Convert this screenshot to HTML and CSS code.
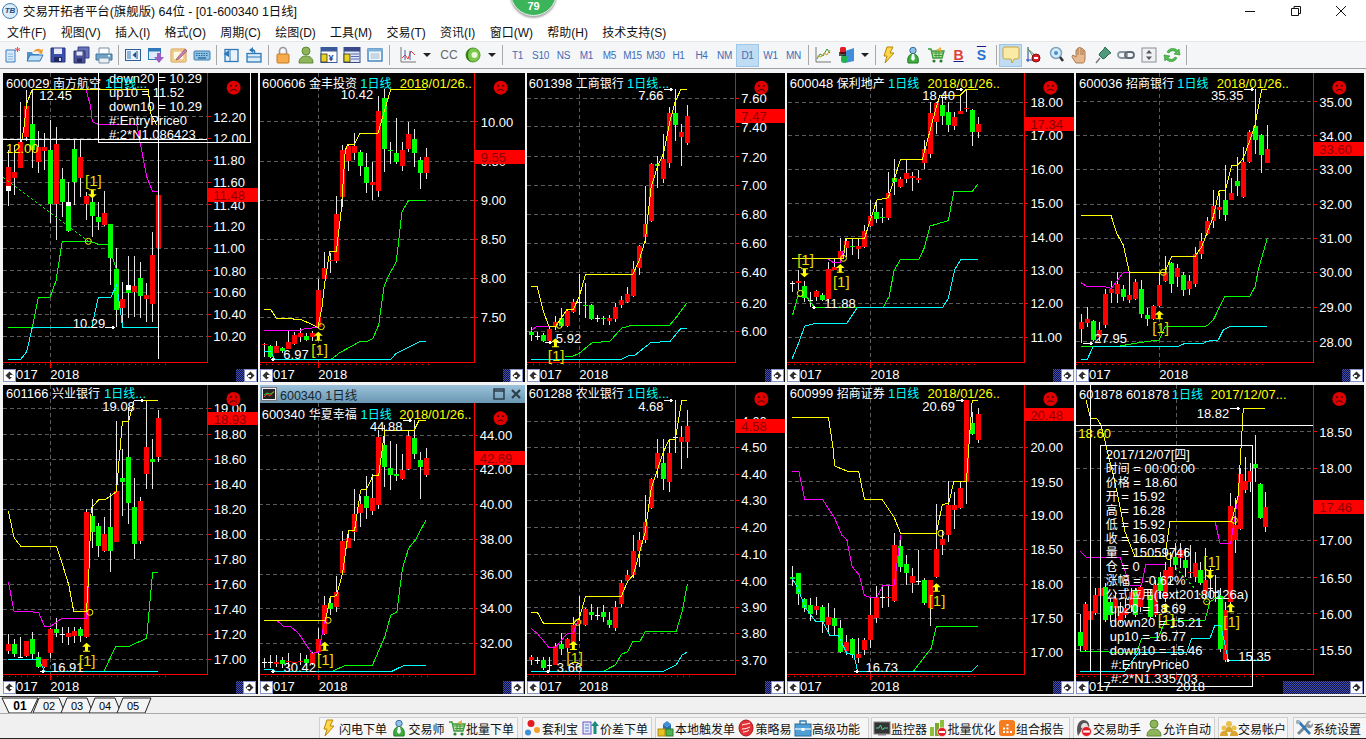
FILE: index.html
```html
<!DOCTYPE html>
<html lang="zh">
<head>
<meta charset="utf-8">
<title>交易开拓者平台(旗舰版) 64位</title>
<link rel="stylesheet" href="styles.css">
</head>
<body>
<svg class="defs" width="0" height="0" aria-hidden="true">
  <symbol id="i-bolt" viewBox="0 0 18 18"><path d="M10 1H6L3 10h3l-2 7 9-10H9l3-6z" fill="#ffd84a" stroke="#b8860b"/></symbol>
  <symbol id="i-trader" viewBox="0 0 18 18"><circle cx="9" cy="4.5" r="3.2" fill="#8fc1e8" stroke="#3a6d9c"/><path d="M4 17c-1-6 1-9 5-9s6 3 5 9z" fill="#3fae3f" stroke="#1f7a1f"/><path d="M8 8h2l1 5-2 2-2-2z" fill="#f3f8ff"/></symbol>
  <symbol id="i-cart" viewBox="0 0 18 18"><path d="M1 3h3l2 9h9l2-7H5" fill="#bfe3a8" stroke="#3f9a3f" stroke-width="1.4"/><path d="M6 7h10M7 9.500h8M9 5v7M12 5v7" stroke="#3f9a3f" fill="none"/><circle cx="7" cy="15" r="1.600" fill="#2e7d2e"/><circle cx="14" cy="15" r="1.600" fill="#2e7d2e"/><path d="M9 4l5-3v5z" fill="#e8a020" opacity=".8"/></symbol>
  <symbol id="i-person" viewBox="0 0 18 18"><circle cx="9" cy="5" r="4" fill="#8fb55a" stroke="#5f8a35"/><path d="M2 17c0-5 3-7 7-7s7 2 7 7z" fill="#8fb55a" stroke="#5f8a35"/></symbol>
  <symbol id="i-no" viewBox="0 0 10 10"><circle cx="5" cy="5" r="4.500" fill="#e31b23" stroke="#fff" stroke-width=".6"/><rect x="2" y="4" width="6" height="2" fill="#fff"/></symbol>
</svg>

<header class="titlebar">
  <span class="logo">TB</span>
  <span class="apptitle">交易开拓者平台(旗舰版) 64位 - [01-600340 1日线]</span>
  <div class="winctl">
    <svg width="14" height="14" viewBox="0 0 14 14"><path d="M1 7.500h10" stroke="#111" fill="none"/></svg>
    <svg width="14" height="14" viewBox="0 0 14 14"><path d="M2.500 4.500h7v7h-7zM5 4.500V2.500h6.500v7h-2" stroke="#111" fill="none"/></svg>
    <svg width="14" height="14" viewBox="0 0 14 14"><path d="M2 2l10 10M12 2L2 12" stroke="#111" fill="none"/></svg>
  </div>
  <div class="badge"><span>79</span></div>
</header>

<nav class="menubar">
  <span>文件(F)</span><span>视图(V)</span><span>插入(I)</span><span>格式(O)</span><span>周期(C)</span><span>绘图(D)</span><span>工具(M)</span><span>交易(T)</span><span>资讯(I)</span><span>窗口(W)</span><span>帮助(H)</span><span>技术支持(S)</span>
</nav>

<div class="toolbar">
  <span class="btn"><svg viewBox="0 0 18 18"><path d="M3 4h9v12H3z" fill="#d8e9f8" stroke="#3a7cc0"/><path d="M5 8h5M5 10.500h5M5 13h5" stroke="#8db8de"/><path d="M14.500 1v5M12 2.500l5 2M17 2.500l-5 2" stroke="#ef4a4a"/></svg></span>
  <span class="btn"><svg viewBox="0 0 18 18"><path d="M1 15V6h5l1 2h6v7z" fill="#4f93d0"/><path d="M1 15l3-6h13l-3 6z" fill="#bfe0f7" stroke="#2a72b5"/><path d="M7 6c3-4 6-4 8-2l2-1-1 5-4-1 2-1c-2-1-4-1-7 0z" fill="#f09a2c"/></svg></span>
  <span class="btn"><svg viewBox="0 0 18 18"><path d="M2 2h14v14H2z" fill="#3d4fae" stroke="#27337a"/><rect x="5" y="2.500" width="8" height="5.500" fill="#e8ecf8"/><rect x="5" y="11" width="8" height="5" fill="#20285f"/><rect x="10" y="12" width="2" height="3" fill="#c9d2ef"/></svg></span>
  <span class="btn"><svg viewBox="0 0 18 18"><path d="M6 1h11v11H6z" fill="#6870b8" stroke="#3b4288"/><path d="M2 5h11v12H2z" fill="#4b5298" stroke="#2e3470"/><rect x="4.500" y="5.500" width="6" height="4" fill="#e1e4f2"/><rect x="5" y="12.500" width="5" height="4" fill="#262b60"/></svg></span>
  <span class="btn"><svg viewBox="0 0 18 18"><path d="M4 7V2h10v5" fill="#fff" stroke="#7a8ea5"/><path d="M1 8h16v6H1z" fill="#6ea4c9" stroke="#3f7098"/><path d="M4 12h10v5H4z" fill="#eaf1f6" stroke="#7a8ea5"/><rect x="13" y="9" width="2" height="1.500" fill="#fff"/></svg></span>
  <i class="sep"></i>
  <span class="btn"><svg viewBox="0 0 18 18"><rect x="1.500" y="3.500" width="15" height="11" fill="#eaf3fb" stroke="#2f5f95"/><rect x="3" y="5" width="4" height="8" fill="#8fb5d8"/><path d="M12 6l-3.500 3 3.500 3z" fill="#26507f"/><path d="M13 5v8" stroke="#26507f"/></svg></span>
  <span class="btn"><svg viewBox="0 0 18 18"><rect x="1.500" y="2.500" width="12" height="11" fill="#dcecf9" stroke="#2f79b8"/><rect x="1.500" y="2.500" width="12" height="3" fill="#2f79b8"/><path d="M10 7h4v4h3l-5 6-5-6h3z" fill="#9a5fc6"/></svg></span>
  <span class="btn"><svg viewBox="0 0 18 18"><rect x="1" y="3" width="15" height="13" rx="1" fill="#fbe6b8" stroke="#d69a3a"/><rect x="3" y="5" width="11" height="9" fill="#fff8e2" stroke="#e0b060"/><path d="M7 12l8-9 2 2-8 8-3 1z" fill="#c879c2" stroke="#8c5a3a" stroke-width=".6"/></svg></span>
  <span class="btn"><svg viewBox="0 0 18 18"><rect x="1" y="5" width="16" height="9" rx="1" fill="#8cc1e4" stroke="#3a7cae"/><path d="M3 7.500h12M3 9.500h12" stroke="#2e6b9a" stroke-dasharray="1.500 1"/><path d="M5 12h8" stroke="#2e6b9a" stroke-width="1.400"/></svg></span>
  <i class="sep"></i>
  <span class="btn"><svg viewBox="0 0 18 18"><rect x="3" y="3.500" width="13" height="12" fill="#eaf3fb" stroke="#2f79b8" stroke-width="1.300"/><path d="M8 3.500v12" stroke="#2f79b8"/><path d="M7 4L1.500 8 7 11z" fill="#2f79b8"/></svg></span>
  <span class="btn"><svg viewBox="0 0 18 18"><rect x="2" y="7.500" width="14" height="8.500" fill="#dcecf9" stroke="#2f79b8" stroke-width="1.300"/><path d="M2 11h14" stroke="#2f79b8"/><path d="M9 8c2-1 2-4-1-5V1L4 4l4 3V5c1 .5 1 2 1 3z" fill="#2f79b8"/></svg></span>
  <i class="sep"></i>
  <span class="btn"><svg viewBox="0 0 18 18"><path d="M5.500 8V5a3.500 3.500 0 0 1 7 0v3" fill="none" stroke="#9a9a9a" stroke-width="1.600"/><rect x="3" y="8" width="12" height="9" rx="1" fill="#f6ab4c" stroke="#c77a20"/></svg></span>
  <span class="btn"><svg viewBox="0 0 18 18"><use href="#i-person"/></svg></span>
  <span class="btn"><svg viewBox="0 0 18 18"><rect x="1" y="1.500" width="16" height="15" fill="#fff" stroke="#3b5a9a"/><rect x="1" y="1.500" width="16" height="4" fill="#3b5a9a"/><text x="8.500" y="15" class="ytxt">¥</text><rect x="1" y="8" width="6" height="8" fill="#e6d21f" stroke="#333" stroke-width=".8"/></svg></span>
  <span class="btn"><svg viewBox="0 0 18 18"><rect x="1" y="1.500" width="16" height="15" fill="#dfe8f6" stroke="#3b4a8a"/><rect x="1" y="1.500" width="16" height="4" fill="#3b4a8a"/><path d="M8 8h8M8 10.500h8M8 13h8" stroke="#5a6bb0"/><rect x="1" y="8" width="6" height="8" fill="#e6d21f" stroke="#333" stroke-width=".8"/></svg></span>
  <span class="btn"><svg viewBox="0 0 18 18"><rect x="2" y="3" width="14" height="12" fill="#f2f7fc" stroke="#2f79b8" stroke-width="1.300"/><rect x="2" y="3" width="14" height="2.500" fill="#7fb2da"/><path d="M4.500 8h9M4.500 10h9M4.500 12h9" stroke="#9bb7cf"/></svg></span>
  <i class="sep"></i>
  <span class="btn first"><svg viewBox="0 0 18 18"><path d="M2 1v15h15" fill="none" stroke="#777"/><path d="M3 12l3-3 3 4 3-8 4 4" fill="none" stroke="#e33"/><path d="M6 4v10M11 5v9" stroke="#3b5fa8"/></svg></span>
  <span class="btn arrow"><i class="drop"></i></span>
  <span class="btn cc">CC</span>
  <span class="btn"><svg viewBox="0 0 18 18"><circle cx="9" cy="9" r="7" fill="#7cc84a" stroke="#4f9a2e"/><path d="M9 2a7 7 0 0 0 0 14 5 7 0 0 1 0-14z" fill="#2f7a1e"/><circle cx="10.500" cy="9" r="3" fill="#eaf7d8"/></svg></span>
  <span class="btn arrow"><i class="drop"></i></span>
  <i class="sep wide"></i>
  <span class="btn txt">T1</span><span class="btn txt">S10</span><span class="btn txt">NS</span><span class="btn txt">M1</span><span class="btn txt">M5</span><span class="btn txt">M15</span><span class="btn txt">M30</span><span class="btn txt">H1</span><span class="btn txt">H4</span><span class="btn txt">NM</span><span class="btn txt on">D1</span><span class="btn txt">W1</span><span class="btn txt">MN</span>
  <i class="sep"></i>
  <span class="btn"><svg viewBox="0 0 18 18"><path d="M2 1v15h15" fill="none" stroke="#777"/><path d="M3 13l3-5 3 2 4-7 3 4" fill="none" stroke="#2e9a2e"/><path d="M3 10l4 1 3-4 3 2 3-5" fill="none" stroke="#c8a020"/></svg></span>
  <span class="btn"><svg viewBox="0 0 18 18"><path d="M8 5l9-3v13l-9 2z" fill="#3f8fd8"/><rect x="3" y="1" width="6" height="7" rx="1.500" fill="#e31b23"/><rect x="4" y="9" width="6" height="8" rx="3" fill="#21b24b"/><rect x="2" y="6" width="7" height="4" fill="#111" opacity=".7"/></svg></span>
  <span class="btn arrow"><i class="drop"></i></span>
  <i class="sep"></i>
  <span class="btn"><svg viewBox="0 0 18 18"><use href="#i-bolt"/></svg></span>
  <span class="btn"><svg viewBox="0 0 18 18"><use href="#i-trader"/></svg></span>
  <span class="btn"><svg viewBox="0 0 18 18"><use href="#i-cart"/></svg></span>
  <span class="btn bs b">B</span>
  <span class="btn bs s">S</span>
  <i class="sep"></i>
  <span class="btn on"><svg viewBox="0 0 18 18"><path d="M3 1h12a2 2 0 0 1 2 2v8a2 2 0 0 1-2 2h-3l-2 4-1-4H3a2 2 0 0 1-2-2V3a2 2 0 0 1 2-2z" fill="#fbe9a6" stroke="#c9a640"/></svg></span>
  <span class="btn"><svg viewBox="0 0 18 18"><path d="M3 1v15M1 14h14" stroke="#1e3fa8" fill="none"/><path d="M3 3l8 7" stroke="#777" fill="none"/><path d="M3 3l6 9" stroke="#3aa83a" fill="none"/><circle cx="11" cy="12" r="4" fill="#e31b23" stroke="#7a1010"/><rect x="9" y="11" width="4" height="2" fill="#fff"/></svg></span>
  <span class="btn"><svg viewBox="0 0 18 18"><circle cx="8" cy="7" r="5.500" fill="#d6eaf8" stroke="#7fa3bd" stroke-width="1.500"/><circle cx="8" cy="7" r="2" fill="#3f8fd8"/><path d="M12 11l3 4" stroke="#333" stroke-width="2.500"/></svg></span>
  <span class="btn"><svg viewBox="0 0 18 18"><path d="M5 17c-2-3-4-5-4-7l1-1 3 2V4l1.500-.5L7 2l1.500-.5L10 2l1.500.5L12 3.500 13 4l1 1v7c0 3-1 5-2 5z" fill="#e8b98f" stroke="#a87850"/><path d="M7 2.500V9M10 2.500V9M12 4v5" stroke="#a87850" fill="none"/></svg></span>
  <span class="btn"><svg viewBox="0 0 18 18"><path d="M11 1l6 6-2 1-4 4-2 1-4-4 1-2 4-4z" fill="#4f9a7a" stroke="#2a6a50"/><path d="M6 12l-4 5" stroke="#777" stroke-width="1.400"/></svg></span>
  <span class="btn"><svg viewBox="0 0 18 18"><rect x="1" y="6" width="9" height="6" rx="3" fill="none" stroke="#8a949e" stroke-width="1.800"/><rect x="8" y="6" width="9" height="6" rx="3" fill="none" stroke="#5f6a75" stroke-width="1.800"/></svg></span>
  <span class="btn"><svg viewBox="0 0 18 18"><rect x="2" y="2" width="14" height="14" fill="#eef0f2" stroke="#8a8f95"/><path d="M9 4l3 3.500H6zM9 14l3-3.500H6z" fill="#555"/></svg></span>
  <span class="btn"><svg viewBox="0 0 18 18"><path d="M4 6a6.500 6.500 0 0 1 11-1l1-2 1 6-6-1 2-1.500A4 4 0 0 0 6 7z" fill="#4fbf4f" stroke="#2a8a2a" stroke-width=".6"/><path d="M14 12a6.500 6.500 0 0 1-11 1l-1 2-1-6 6 1-2 1.500A4 4 0 0 0 12 11z" fill="#4fbf4f" stroke="#2a8a2a" stroke-width=".6"/></svg></span>
  <i class="sep"></i>
</div>

<main class="desk">
  <section class="win"><div class="plot"></div></section>
  <section class="win"><div class="plot"></div></section>
  <section class="win"><div class="plot"></div></section>
  <section class="win"><div class="plot"></div></section>
  <section class="win"><div class="plot"></div></section>
  <section class="win"><div class="plot"></div></section>
  <section class="win active">
    <div class="caption">
      <svg class="capicon" viewBox="0 0 16 14"><rect x=".5" y=".5" width="15" height="13" fill="#eef" stroke="#777"/><rect x="2" y="2" width="12" height="10" fill="#222"/><path d="M3 10l3-3 3 2 4-5" stroke="#f33" fill="none"/><path d="M3 8l3-2 3 1 4-2" stroke="#3c3" fill="none"/></svg>
      <span class="captext">600340 1日线</span>
      <svg class="capbtn" viewBox="0 0 12 12"><path d="M1 1h10v10H1z M1 3h10" stroke="#2b3e4c" stroke-width="1.500" fill="none"/></svg>
      <svg class="capbtn" viewBox="0 0 12 12"><path d="M2 2l8 8M10 2l-8 8" stroke="#2b3e4c" stroke-width="2.200" fill="none"/></svg>
    </div>
    <div class="plot"></div>
  </section>
  <section class="win"><div class="plot"></div></section>
  <section class="win"><div class="plot"></div></section>
  <section class="win"><div class="plot"></div></section>
</main>

<div class="tabs">
  <svg width="165" height="17" viewBox="0 0 165 17">
    <path class="tab" d="M39 1 L33 16 H65 L59 1 Z"/>
    <path class="tab" d="M67 1 L61 16 H93 L87 1 Z"/>
    <path class="tab" d="M95 1 L89 16 H121 L115 1 Z"/>
    <path class="tab" d="M123 1 L117 16 H145 L151 1 Z"/>
    <path class="tab sel" d="M2 1 L9 16 H31 L38 1 Z"/>
    <text x="20" y="13" class="tabtxt bold">01</text>
    <text x="49" y="13" class="tabtxt">02</text>
    <text x="77" y="13" class="tabtxt">03</text>
    <text x="105" y="13" class="tabtxt">04</text>
    <text x="133" y="13" class="tabtxt">05</text>
  </svg>
</div>

<footer class="statusbar">
  <div class="grp g1">
    <span class="item"><svg viewBox="0 0 18 18"><use href="#i-bolt"/></svg>闪电下单</span>
    <span class="item"><svg viewBox="0 0 18 18"><use href="#i-trader"/></svg>交易师</span>
    <span class="item"><svg viewBox="0 0 18 18"><use href="#i-cart"/></svg>批量下单</span>
  </div>
  <div class="grp g2">
    <span class="item"><svg viewBox="0 0 18 18"><circle cx="7" cy="4.500" r="3.500" fill="#e31b23"/><circle cx="4" cy="13.500" r="3" fill="#3f8fd8"/><circle cx="13" cy="11" r="3" fill="#f2a12e"/></svg>套利宝</span>
    <span class="item"><svg viewBox="0 0 18 18"><rect x="1" y="3" width="8" height="12" fill="#e9e3f7" stroke="#6a58c0"/><path d="M3 6h4M3 9h4M3 12h4" stroke="#3f8fd8"/><path d="M13 2l4 5h-2.500v8h-3V7H9z" fill="#1a8a80"/></svg>价差下单</span>
  </div>
  <div class="grp g3">
    <span class="item"><svg viewBox="0 0 18 18"><path d="M6 5l4-3 4 3-4 3z" fill="#3f8fd8"/><path d="M6 5v5l4 2V8zM14 5v5l-4 2V8z" fill="#2a6fb5"/><rect x="1" y="10" width="7" height="7" fill="#e9c21f" stroke="#a88a10"/><rect x="9" y="10" width="7" height="7" fill="#4fb44f" stroke="#2a7a2a"/></svg>本地触发单</span>
    <span class="item"><svg viewBox="0 0 18 18"><ellipse cx="9" cy="9" rx="7" ry="8" fill="#e33236" stroke="#a91a1e"/><path d="M5 6c3-1 6-1 8-2M5 10c3 0 6-1 8-2M6 13c2 0 5-1 6-2" stroke="#fff" fill="none"/></svg>策略易</span>
    <span class="item"><svg viewBox="0 0 18 18"><path d="M6 5V2h6v3" fill="none" stroke="#3a7cae" stroke-width="1.400"/><rect x="1" y="5" width="16" height="12" fill="#4f9ed6" stroke="#2a6d9e"/><path d="M1 10h16" stroke="#cfe6f6" stroke-width="1.500"/><rect x="7.500" y="9" width="3" height="3" fill="#fff"/></svg>高级功能</span>
  </div>
  <div class="grp g4">
    <span class="item"><svg viewBox="0 0 18 18"><rect x="1" y="3" width="16" height="12" fill="#333" stroke="#888"/><path d="M3 9h3l1.500-3 2 5 1.500-2h4" fill="none" stroke="#4fd08f"/><rect x="5" y="15" width="8" height="1.500" fill="#888"/></svg>监控器</span>
    <span class="item"><svg viewBox="0 0 18 18"><rect x="1" y="8" width="4" height="9" fill="#8fbf3a"/><rect x="6" y="4" width="4" height="13" fill="#7aa82e"/><rect x="11" y="1" width="4" height="10" fill="#8fbf3a"/><use href="#i-no" x="8" y="8" width="10" height="10"/></svg>批量优化</span>
    <span class="item"><svg viewBox="0 0 18 18"><rect x="1" y="1" width="16" height="16" rx="3" fill="#f57d20"/><path d="M5 12h2v2H5zM8.500 12h2v2h-2zM12 12h2v2h-2zM5 8.500h2v2H5zM8.500 8.500h2v2h-2zM8.500 5h2v2h-2z" fill="#fff"/></svg>组合报告</span>
  </div>
  <div class="grp g5">
    <span class="item"><svg viewBox="0 0 18 18"><path d="M3 17C1 10 2 2 8 1c5 0 7 4 6 8H8z" fill="#555"/><path d="M6 9c0-3 1-5 4-5 2 0 3 2 3 4z" fill="#e3e3e3"/><use href="#i-no" x="6" y="7" width="11" height="11"/></svg>交易助手</span>
    <span class="item"><svg viewBox="0 0 18 18"><use href="#i-person"/></svg>允许自动</span>
  </div>
  <div class="grp g6">
    <span class="item"><svg viewBox="0 0 18 18"><circle cx="9" cy="5" r="3" fill="#e8c04a"/><path d="M5 13c0-4 2-5 4-5s4 1 4 5z" fill="#d8a52e"/><circle cx="4" cy="9" r="2.500" fill="#e8c04a"/><path d="M0 17c0-4 2-5 4-5s4 1 4 5z" fill="#d8a52e"/><circle cx="14" cy="9" r="2.500" fill="#e8c04a"/><path d="M10 17c0-4 2-5 4-5s4 1 4 5z" fill="#d8a52e"/></svg>交易帐户</span>
  </div>
  <div class="grp g7">
    <span class="item"><svg viewBox="0 0 18 18"><path d="M3 15l9-9" stroke="#7a8a95" stroke-width="3"/><path d="M11 7a4 4 0 0 1 5-5l-2.500 2.500 2 2L18 4a4 4 0 0 1-5 5z" fill="#8a98a3"/><path d="M4 3l11 12" stroke="#2f79b8" stroke-width="2.600"/><circle cx="3" cy="3" r="2.200" fill="#9fb1bd"/></svg>系统设置</span>
  </div>
</footer>
<script src="chart.js"></script>
</body>
</html>
```
FILE: styles.css
```css
* { box-sizing: border-box; }
html, body { margin: 0; height: 739px; overflow: hidden; background: #f0f0f0; }
body { width: 1366px; font: 12px "Liberation Sans", "Noto Sans CJK SC", sans-serif; color: #111; }
.defs { position: absolute; }

.titlebar { position: relative; height: 22px; background: #fff; display: flex; align-items: center; padding-left: 2px; }
.logo { width: 16px; height: 16px; border-radius: 50%; border: 1.500px solid #3f7fb5; background: #dcecf8; color: #1d4f86; font: italic bold 8px/13px "Liberation Sans", sans-serif; text-align: center; margin-right: 5px; }
.apptitle { font-size: 12.400px; }
.winctl { margin-left: auto; display: flex; gap: 31px; padding-right: 18px; }
.badge { position: absolute; left: 510px; top: -31px; width: 47px; height: 47px; border-radius: 50%; background: #3cb55a; box-shadow: 0 2px 2px #aaa; border: 1px solid #e8f3ea; display: flex; align-items: flex-end; justify-content: center; color: #fff; font-weight: bold; font-size: 11px; padding-bottom: 3px; }

.menubar { height: 20px; background: #fff; display: flex; gap: 14.300px; padding-left: 7px; align-items: center; font-size: 12px; border-bottom: 1px solid #e6e6e6; }

.toolbar { height: 26px; background: #f5f6f7; display: flex; align-items: center; }
.btn { width: 23px; height: 23px; display: flex; align-items: center; justify-content: center; flex: none; border: 1px solid transparent; }
.btn svg { width: 18px; height: 18px; display: block; }
.btn.first { margin-left: 4px; }
.btn.arrow { width: 15px; }
.btn.cc { color: #666; font-size: 12px; width: 24px; margin-left: 3px; }
.btn.txt { font-size: 10px; color: #3f6cb8; letter-spacing: -.3px; }
.btn.on { background: #c0dcf3; border-color: #9cc6ea; }
.btn.bs { font: bold 14px "Liberation Sans", sans-serif; }
.btn.b { color: #e0403a; text-decoration: underline; text-decoration-color: #1a1a8a; }
.btn.s { color: #1f6fd0; text-decoration: overline; text-decoration-color: #1a1a8a; }
.drop { width: 0; height: 0; border-style: solid; border-width: 4px 4px 0; border-color: #222 transparent transparent; }
.sep { width: 1px; height: 20px; background: #a8a8a8; margin: 0 2.500px; flex: none; }
.sep.wide { margin: 0 3px 0 3px; }
.ytxt { font: bold 9px "Liberation Sans", sans-serif; fill: #1a3a8a; }

.desk { height: 628px; background: #f4f4f4; border-top: 1px solid #a0a0a0; padding: 4px 0 0 3px; display: grid; grid-template-columns: 255px 265px 258px 287px 288px; grid-template-rows: 309px 309px; gap: 3px 2px; }
.win { background: #000; display: flex; flex-direction: column; overflow: hidden; }
.plot { flex: 1; min-height: 0; }
.plot svg { display: block; }
.caption { height: 18px; flex: none; display: flex; align-items: center; gap: 3px; padding: 0 3px 0 1px; background: linear-gradient(#9cc2da, #6a97b2); color: #16262f; font-size: 12.500px; }
.capicon { width: 16px; height: 14px; }
.captext { flex: 1; }
.capbtn { width: 12px; height: 12px; margin-left: 2px; }

.t { font: 13px "Liberation Sans", "Noto Sans CJK SC", sans-serif; fill: #fff; }
.t tspan.c { font-size: 12px; }
.t.mk { font-size: 15px; }

.tabs { height: 18px; border-top: 1px solid #333; background: #f0f0f0; border-bottom: 1px solid #a9a9a9; overflow: hidden; }
.tabs svg { display: block; }
.tab { fill: #f4f4f4; stroke: #222; }
.tab.sel { fill: #fff; }
.tabtxt { font: 11px "Liberation Sans", sans-serif; text-anchor: middle; }
.tabtxt.bold { font-weight: bold; font-size: 12px; }

.statusbar { height: 25px; background: #f0f0f0; display: flex; gap: 3px; padding: 3px 0 0 319px; border-bottom: 1px solid #222; }
.grp { display: flex; justify-content: space-between; padding: 0 3px 0 1px; background: #f6f6f6; border: 1px solid #d0d0d0; border-width: 1px 1px 0 1px; align-items: center; flex: none; }
.g1 { width: 199px; margin-right: 1px; }
.g2 { width: 130px; }
.g3 { width: 214px; padding-right: 8px; margin-right: -1px; }
.g4 { width: 199px; padding-right: 5px; }
.g5 { width: 142px; }
.g6 { width: 70px; margin-right: 2px; }
.g7 { width: 73px; border-right: 0; }
.item { display: flex; align-items: center; font-size: 12px; white-space: nowrap; color: #111; }
.item svg { width: 18px; height: 18px; flex: none; }
```
FILE: chart.js
```js
var W='#ffffff',Y1='#ffff00',R='#ff0000',G='#00ff00',C='#00ffff',M='#ff00ff',MK='#e8dc00';
var panels=[
{z:3,ox:0,oy:70,vb:[3,73,255,309],l:10,rx:622,by:877,vx:151,lx:640,ti:[['600029 南方航空',18,W],['1日线...',315,C]],ty:38,face:[701,53],dz:[708,730],bt:732,
 ax:[['12.20',140],['12.00',205],['11.80',271],['11.60',337],['11.40',404],['11.20',469],['11.00',535],['10.80',602],['10.60',667],['10.40',733],['10.20',799]],tag:['11.48',354,396],
 cs:'25,292,347,240,407,r 25,347,362,347,362,W 43,306,323,225,375,r 61,215,294,97,290,r 79,108,200,60,213,r 97,162,240,60,295,g 115,232,275,183,308,r 133,232,243,188,300,r 151,240,402,150,460,g 169,222,402,172,510,r 187,327,395,295,440,g 205,408,483,335,487,g 205,395,408,395,408,W 223,237,335,210,405,g 241,262,323,208,380,r 259,378,402,365,450,r 277,396,437,385,500,g 295,441,456,397,480,g 313,429,465,363,468,r 331,462,563,462,645,g 349,597,719,535,770,g 367,688,713,635,770,r 385,660,668,558,745,g 385,646,660,646,660,W 403,648,665,558,740,r 421,624,678,575,745,g 439,676,686,640,755,r 457,555,701,485,755,r 475,376,533,376,533,r',
 g:['25,772 97,772 115,682 150,682 168,632 187,514 270,514 295,523 325,523 340,570 350,600'],c:['25,868 62,868 80,845 97,772 275,772 295,682 332,682 350,645 368,772 475,772'],m:['258,58 272,110 277,155 295,163 410,163 420,215 440,320 458,365 475,365'],y:['65,215 72,170 80,100 97,58 445,58 452,130 470,165'],dash:['10,323 265,514'],
 tx:[['12.45',118,75],['10.29',218,758],['12.00',18,233,Y1],['[1]',255,333,MK],['down20 = 10.29',327,25],['up10 = 11.52',327,67],['down10 = 10.29',327,109],['#:EntryPrice0',327,151],['#:2*N1.086423',327,193]],
 box:[296,0,752,216],cross:[208,475],dn:[[277,358,385]],up:[],ci:[[265,514]],arr:[[315,345,771]]},
{z:3,ox:258,oy:70,vb:[260,73,265,309],l:8,rx:650,by:877,vx:181,lx:668,ti:[['600606 金丰投资',12,W],['1日线',307,C],['2018/01/26..',425,Y1]],ty:38,face:[728,53],dz:[736,756],bt:758,
 ax:[['10.00',155],['9.50',274],['9.00',391],['8.50',508],['8.00',625],['7.50',742]],tag:['9.55',240,282],
 cs:'20,822,825,818,860,r 38,828,862,825,865,g 56,828,849,813,850,r 74,834,842,830,850,g 92,816,837,782,838,r 110,796,822,785,825,r 128,790,801,775,815,r 146,798,809,790,812,g 164,790,801,782,812,r 182,660,770,628,775,r 200,594,627,545,628,r 218,570,574,548,610,r 236,432,573,378,578,r 254,240,381,225,410,r 272,228,273,222,302,r 290,228,248,190,270,r 308,246,288,240,318,g 326,291,339,250,368,g 344,336,345,276,390,r 362,124,362,78,380,r 380,84,237,58,305,g 398,241,243,215,282,g 416,249,276,145,282,g 434,240,288,215,303,r 452,192,237,156,246,r 470,208,249,178,290,g 488,270,309,262,356,g 506,261,309,234,326,r',
 g:['220,868 245,848 305,815 330,813 345,805 362,765 378,650 390,620 415,575 432,425 452,391 503,391'],c:['18,844 38,844 50,868 398,868 415,850 488,814 503,814'],m:['18,781 128,781 145,775 180,773'],y:['18,718 38,718 55,745 128,748 180,772 192,710 200,640 215,545 235,545 250,420 262,240 270,222 290,222 305,190 360,190 380,120 398,58 503,58'],
 tx:[['10.42',248,73],['6.97',76,853],['[1]',160,840,MK]],up:[[181,785,812]],ci:[[190,770]],arr:[[40,52,868]]},
{z:2.851,ox:526,oy:70,vb:[527,73,258,309],l:5,rx:597,by:877,vx:152,lx:614,ti:[['601398 工商银行',8,W],['1日线...',288,C]],ty:38,face:[671,53],dz:[680,698],bt:700,
 ax:[['7.60',85],['7.40',170],['7.20',260],['7.00',346],['6.80',433],['6.60',520],['6.40',607],['6.20',698],['6.00',784]],tag:['7.47',118,158],
 cs:'16,786,794,770,812,g 33,797,797,787,810,w 50,795,813,790,815,g 67,778,813,770,815,r 84,755,772,738,780,r 101,743,768,715,770,g 118,722,767,720,772,r 135,696,725,686,728,r 152,697,697,612,735,w 169,705,706,640,745,g 186,705,746,703,750,g 203,744,744,735,755,w 220,744,746,738,765,g 237,744,752,735,765,r 254,712,748,700,755,r 272,690,705,678,715,r 289,672,696,652,698,r 306,597,678,572,680,r 323,527,593,525,615,r 340,462,500,348,520,r 357,282,453,280,455,r 374,282,287,258,354,g 392,267,327,192,338,r 409,129,278,112,295,r 426,129,165,58,212,g 443,186,201,162,288,r 460,138,219,105,225,r',
 g:['110,860 135,858 152,850 190,817 238,815 272,775 305,765 410,765 430,740 458,700'],c:['14,868 272,868 290,858 310,856 357,817 410,815 442,775 458,775'],m:['14,782 32,768 84,768'],y:['14,650 32,650 50,725 65,768 84,770 100,745 118,717 135,717 152,680 170,612 305,612 323,570 340,510 357,350 375,290 392,250 409,160 425,95 442,58 460,58'],
 tx:[['7.66',320,75],['5.92',85,803],['[1]',62,858,MK]],up:[[84,805,832]],ci:[[95,766]],arr:[[393,420,58],[55,75,817]]},
{z:2.851,ox:526,oy:70,vb:[787,73,287,309],l:748,rx:1421,by:877,vx:982,lx:1438,ti:[['600048 保利地产',752,W],['1日线',1032,C],['2018/01/26..',1145,Y1]],ty:38,face:[1495,53],dz:[1503,1524],bt:1526,
 ax:[['18.00',97],['17.00',196],['16.00',298],['15.00',400],['14.00',500],['13.00',601],['12.00',700],['11.00',802]],tag:['17.34',142,182],
 cs:'760,640,640,632,665,w 777,634,640,600,660,r 794,648,683,632,695,g 811,690,690,665,710,w 828,663,682,660,692,r 845,675,689,668,692,g 862,597,688,575,700,r 879,592,599,568,600,r 896,544,565,505,570,r 914,514,533,508,560,r 931,527,529,505,555,g 948,528,537,505,568,r 965,484,531,465,535,r 982,438,468,390,470,r 999,425,447,390,460,g 1016,441,445,415,460,g 1033,369,444,305,450,r 1051,323,336,268,375,g 1068,327,352,320,355,r 1085,309,327,270,340,r 1102,318,323,305,362,r 1119,324,329,300,340,r 1136,238,278,210,298,r 1153,130,251,95,263,r 1170,100,155,96,192,r 1187,105,138,85,165,g 1204,126,165,95,185,g 1221,142,167,125,180,r 1239,123,131,75,128,r 1256,115,118,60,125,r 1273,120,185,118,228,g 1290,162,185,142,204,r',
 g:['760,735 775,680 800,680 822,712 1018,712 1035,680 1050,600 1068,568 1120,568 1135,535 1152,468 1204,452 1220,364 1273,364 1288,342'],c:['758,868 775,825 795,768 825,760 915,760 945,712 1188,712 1204,685 1222,600 1240,568 1288,568'],m:['862,568 875,577 896,577 905,540'],y:['758,565 905,565 912,505 965,505 1000,390 1033,383 1068,268 1130,268 1170,110 1180,76 1238,76 1255,58 1288,58'],
 tx:[['18.40',1130,75],['11.88',850,698],['[1]',773,570,MK],['[1]',875,635,MK]],dn:[[794,595,622]],up:[[896,582,608]],ci:[[782,670],[905,565]],arr:[[1225,1245,58],[815,828,712]]},
{z:3,ox:1075,oy:70,vb:[1076,73,288,309],l:5,rx:716,by:877,vx:253,lx:733,ti:[['600036 招商银行',12,W],['1日线',307,C],['2018/01/26..',425,Y1]],ty:38,face:[793,53],dz:[802,822],bt:825,
 ax:[['35.00',95],['34.00',197],['33.00',298],['32.00',403],['31.00',505],['30.00',607],['29.00',712],['28.00',815]],tag:['33.60',216,258],
 cs:'19,756,776,732,818,r 37,747,759,711,770,r 55,753,809,750,812,g 73,781,802,755,812,r 91,672,765,658,775,r 109,656,669,632,700,r 127,642,672,606,700,r 145,657,681,645,692,g 163,675,690,606,698,r 181,636,687,627,690,r 199,657,732,630,745,g 217,735,747,715,767,g 235,708,747,705,750,r 253,645,708,605,712,r 271,610,633,558,635,r 289,580,642,575,668,g 307,594,621,582,650,r 325,615,660,605,678,g 343,633,657,615,674,r 361,552,641,530,650,r 379,513,552,490,567,r 397,453,492,440,495,r 415,408,453,360,475,r 433,411,420,370,447,r 451,390,435,285,453,g 469,369,390,325,390,r 487,333,348,262,378,g 505,276,382,232,385,r 523,186,276,180,278,r 541,168,210,58,252,g 559,195,255,192,309,g 577,237,279,165,280,r',
 g:['18,829 130,829 180,820 235,812 253,810 270,770 395,768 415,750 450,678 525,678 540,650 550,600 577,505'],c:['18,868 37,868 55,829 310,829 330,820 385,820 395,814 430,810 445,780 465,769 577,769'],m:['18,638 37,650 90,650 109,655 145,607 163,607'],y:['18,436 108,436 125,490 145,525 163,607 270,607 290,558 361,558 380,530 415,440 433,361 451,361 470,286 488,286 505,265 525,210 540,165 560,58 577,58'],
 tx:[['35.35',408,75],['27.95',58,805],['[1]',232,775,MK]],up:[[253,722,748]],ci:[[265,607]],arr:[[508,538,58],[25,55,820]]},
{z:2.981,ox:0,oy:385,vb:[3,385,255,309],l:10,rx:618,by:867,vx:150,lx:637,ti:[['601166 兴业银行',18,W],['1日线...',310,C]],ty:25,face:[696,42],dz:[705,724],bt:726,
 ax:[['19.00',70],['18.80',148],['18.60',223],['18.40',298],['18.20',373],['18.00',448],['17.80',523],['17.60',598],['17.40',673],['17.20',748],['17.00',823]],tag:['18.93',80,120],
 cs:'26,777,798,748,808,r 44,777,807,762,815,g 62,815,815,757,818,w 80,768,813,770,815,r 97,762,807,742,822,g 115,816,846,802,850,g 133,822,846,825,850,r 150,732,804,728,820,r 168,732,744,700,755,g 186,748,748,727,775,w 204,744,755,725,780,r 222,738,753,725,775,r 240,732,753,725,770,g 258,381,755,373,758,r 276,393,441,342,490,g 294,423,483,414,516,g 312,447,498,395,500,r 330,426,498,323,560,g 347,318,471,108,470,r 365,279,291,192,392,g 383,216,354,65,416,g 401,366,477,279,522,g 418,348,468,336,477,r 436,186,267,45,312,r 454,222,231,162,312,g 472,99,216,75,230,r',
 g:['310,859 345,784 385,784 437,760 455,562 470,562'],c:['25,823 115,823 133,859 470,859'],m:['25,592 42,678 115,682 133,725 150,725 186,699 258,699 268,500'],y:['25,378 42,458 62,484 168,484 185,535 205,600 220,680 258,680 265,560 272,370 295,343 315,343 347,320 365,110 383,110 400,47 470,47'],
 tx:[['19.08',305,62],['16.91',152,845],['[1]',235,827,MK]],up:[[258,773,800]],ci:[[268,682]],arr:[[400,430,47],[120,133,858]]},
{z:2.981,ox:0,oy:385,vb:[260,403,265,291],l:775,rx:1414,by:867,vx:950,lx:1430,ti:[['600340 华夏幸福',780,W],['1日线',1075,C],['2018/01/26..',1190,Y1]],ty:87,face:[1492,100],dz:[1500,1522],bt:1524,
 ax:[['44.00',151],['42.00',253],['40.00',358],['38.00',463],['36.00',568],['34.00',670],['32.00',775]],tag:['42.69',198,240],
 cs:'788,831,831,820,850,w 806,830,830,810,850,w 824,830,836,810,845,r 842,825,837,815,850,g 860,828,831,805,845,r 878,830,831,830,831,r 896,828,831,805,840,r 914,822,834,810,840,g 932,805,838,800,840,r 950,762,801,730,810,r 968,660,747,633,750,r 986,654,671,640,690,g 1004,621,666,573,680,r 1021,468,564,438,566,r 1039,459,489,438,470,r 1057,387,441,312,468,r 1075,357,384,333,426,r 1093,333,369,273,402,g 1111,339,378,267,390,r 1129,156,360,135,372,r 1147,180,246,120,306,g 1165,249,270,168,315,g 1183,267,273,177,288,g 1200,255,282,207,285,r 1218,153,252,135,255,r 1236,159,207,105,222,g 1254,225,246,200,342,g 1272,219,270,189,276,r',
 g:['990,859 1030,841 1110,841 1147,755 1165,690 1183,682 1200,550 1218,490 1238,465 1270,405'],c:['787,853 815,853 820,859 1168,859 1205,841 1270,841'],m:['825,706 845,724 865,724 890,745 930,805 950,802 968,706'],y:['787,706 970,706 985,635 1003,632 1021,565 1039,438 1057,436 1075,315 1093,312 1111,273 1129,270 1147,135 1235,135 1250,105 1270,105'],
 tx:[['44.88',1103,122],['30.42',845,845],['[1]',945,825,MK]],up:[[968,770,797]],ci:[[978,706]],arr:[[1200,1228,105],[808,820,858]]},
{z:2.851,ox:526,oy:385,vb:[527,385,258,309],l:5,rx:597,by:867,vx:152,lx:614,ti:[['601288 农业银行',8,W],['1日线...',288,C]],ty:25,face:[671,42],dz:[680,698],bt:700,
 ax:[['4.60',108],['4.50',187],['4.40',268],['4.30',346],['4.20',427],['4.10',508],['4.00',587],['3.90',667],['3.80',745],['3.70',826]],tag:['4.58',103,143],
 cs:'16,816,825,810,840,r 33,825,825,815,838,w 50,826,848,815,855,g 67,841,841,815,860,w 84,784,840,775,840,r 101,778,792,745,810,g 118,763,790,760,800,r 135,720,780,695,780,r 152,706,717,633,768,r 170,672,720,670,722,r 187,681,689,657,705,g 204,691,691,665,705,w 221,681,696,660,712,g 238,705,720,680,730,g 255,666,729,648,738,r 272,594,657,585,665,r 289,570,585,555,585,r 306,498,570,450,580,r 323,465,498,440,545,r 340,411,465,330,475,r 357,282,369,278,372,r 375,204,252,162,280,r 392,234,282,162,315,g 409,204,291,162,320,r 426,157,157,45,205,w 443,156,171,122,252,r 460,123,171,75,220,r',
 g:['222,858 255,840 272,808 290,800 305,769 325,769 340,740 428,740 445,680 460,598'],c:['14,859 392,859 428,840 445,810 458,802'],m:['14,730 32,745 65,787 84,787 118,745 135,745 147,708'],y:['14,681 32,681 50,715 135,715 152,700 170,634 272,634 289,590 306,570 340,440 357,310 392,200 409,162 426,162 444,47 458,47'],
 tx:[['4.68',320,62],['3.66',88,846],['[1]',115,820,MK]],up:[[135,768,795]],ci:[[147,712]],arr:[[393,420,45],[55,68,858]]},
{z:2.851,ox:526,oy:385,vb:[787,385,287,309],l:748,rx:1421,by:867,vx:982,lx:1438,ti:[['600999 招商证券',752,W],['1日线',1032,C],['2018/01/26..',1145,Y1]],ty:25,face:[1495,42],dz:[1503,1524],bt:1526,
 ax:[['20.00',187],['19.50',290],['19.00',391],['18.50',493],['18.00',598],['17.50',700],['17.00',802]],tag:['20.48',68,108],
 cs:'760,577,582,543,603,g 777,565,627,565,660,g 794,642,669,640,680,g 811,660,686,640,708,g 828,663,675,635,690,r 845,666,711,660,745,g 862,696,720,655,745,r 879,699,723,670,750,g 896,729,801,705,805,g 914,771,798,750,810,r 931,762,810,758,820,g 948,807,819,760,835,r 965,765,795,760,810,r 982,690,765,640,790,r 999,636,699,603,715,r 1016,636,636,603,668,w 1033,635,637,603,665,r 1051,480,648,445,652,r 1068,483,546,460,560,g 1085,537,564,510,600,g 1102,573,594,550,625,r 1119,587,587,495,600,w 1136,585,654,580,660,g 1153,585,669,585,722,r 1170,492,576,358,580,r 1187,462,480,435,510,r 1204,360,450,288,470,r 1221,360,375,320,432,r 1239,309,369,288,372,r 1256,45,291,45,357,r 1273,114,147,82,150,g 1290,87,165,70,174,r',
 g:['1105,858 1155,790 1170,725 1288,725'],c:['758,578 775,610 795,665 825,708 845,708 865,750 890,752 915,805 935,810 945,858 1272,858 1288,841'],m:['758,260 778,260 795,343 845,343 880,400 900,450 915,465 930,545 950,570 965,632 982,637 1000,637 1016,603 1050,600 1068,450'],y:['758,97 862,97 875,185 880,243 915,258 948,258 965,343 1015,343 1050,398 1068,445 1170,445 1187,358 1205,356 1220,288 1256,288 1262,190 1272,47 1288,47'],
 tx:[['20.69',1130,62],['16.73',968,846],['[1]',1148,648,MK]],up:[[1170,595,620]],ci:[[1183,445]],arr:[[1225,1250,45],[935,948,858]]},
{z:3,ox:1075,oy:385,vb:[1076,385,288,309],l:5,rx:716,by:868,vx:303,lx:733,ti:[['601878 601878',12,W],['1日线',290,C],['2017/12/07...',407,Y1]],ty:28,face:[793,42],dz:[625,822],bt:825,
 ax:[['18.50',140],['18.00',250],['17.00',466],['16.50',578],['16.00',686],['15.50',794]],tag:['17.46',345,387],
 cs:'17,741,783,688,800,g 31,657,795,650,798,r 47,678,705,640,720,r 61,630,685,610,690,r 76,609,633,605,650,r 91,605,705,595,710,g 107,650,690,640,710,g 120,640,670,620,700,r 136,685,708,650,715,r 152,670,690,640,700,r 168,620,660,610,680,r 182,615,690,610,695,g 197,605,665,600,680,r 227,630,695,615,700,g 242,600,690,585,695,r 257,576,618,560,640,g 272,555,640,530,650,r 287,545,577,500,600,r 302,517,540,475,555,g 317,495,518,475,550,r 332,525,550,490,575,g 347,560,562,480,580,r 362,533,577,500,590,r 376,555,595,530,600,g 392,585,630,490,640,r 407,610,610,550,640,w 420,620,620,570,650,w 437,633,793,610,800,g 452,676,825,650,830,r 467,364,650,325,660,r 482,420,465,340,505,r 497,267,432,250,435,r 511,288,315,215,325,r 526,258,291,235,320,r 541,237,249,150,290,g 557,296,400,295,402,g 572,366,426,320,440,r',
 g:['15,800 185,802 200,760 250,758 270,708 390,705 405,650 437,630'],c:['15,858 150,858 190,803 335,803 350,760 405,760 420,720 437,720 460,826 570,826'],m:['15,498 33,516 135,516 165,600 200,600 212,537 270,537','420,408 435,475 467,475 490,330'],y:['33,45 47,100 65,100 78,120 95,190 115,270 130,340 150,440 180,515 270,515 285,408 470,408 490,330 505,70 570,70'],dash:['302,548 395,650'],
 tx:[['18.82',365,85],['15.35',490,812],['18.60',10,145,Y1],['[1]',385,530,MK],['[1]',248,705,MK],['[1]',445,710,MK],['2017/12/07[四]',92,208],['时间 = 00:00:00',92,250],['价格 = 18.60',92,292],['开 = 15.92',92,334],['高 = 16.28',92,376],['低 = 15.92',92,418],['收 = 16.03',92,460],['量 = 15059746',92,502],['仓 = 0',92,544],['涨幅 = -0.62%',92,586],['公式应用(text20180126a)',92,628],['up20 = 18.69',104,670],['down20 = 15.21',104,712],['up10 = 16.77',104,754],['down10 = 15.46',104,796],['#:EntryPrice0',108,838],['#:2*N1.335703',108,880]],
 box:[77,181,533,904],cross:[120,47],dn:[[405,555,583]],up:[[272,655,682],[467,655,682]],ci:[[395,650],[282,515],[478,406]],arr:[[465,495,70],[455,465,826]]}
];
var NS='http://www.w3.org/2000/svg';
function el(n,a,p,txt){var e=document.createElementNS(NS,n);for(var k in a)e.setAttribute(k,a[k]);if(txt!=null)e.textContent=txt;if(p)p.appendChild(e);return e;}
function rect(p,x,y,w,h,f){return el('rect',{x:x,y:y,width:w,height:h,fill:f,'shape-rendering':'crispEdges'},p);}
function text(p,s,x,y,col){var t=el('text',{x:x,y:y,'class':s=='[1]'?'t mk':'t',style:'fill:'+(col||W)},p);
  s.split(/([\u4e00-\u9fff]+)/).forEach(function(part,i){if(!part)return;el('tspan',i%2?{'class':'c'}:{},t,part);});return t;}
document.querySelectorAll('.plot').forEach(function(host,i){
  var p=panels[i],vb=p.vb;
  var X=function(v){return p.ox+v/p.z;},Yc=function(v){return p.oy+v/3;};
  var s=el('svg',{width:vb[2],height:vb[3],viewBox:vb.join(' ')},host);
  var defs=el('defs',{},s),pat=el('pattern',{id:'dz'+i,width:2,height:2,patternUnits:'userSpaceOnUse'},defs);
  rect(pat,0,0,2,2,'#10103a');rect(pat,0,0,1,1,'#3f50b8');rect(pat,1,1,1,1,'#3f50b8');
  var rx=Math.floor(X(p.rx)),by=Math.floor(Yc(p.by)),lx=Math.floor(X(p.l)),right=vb[0]+vb[2],top=vb[1];
  function grid(x1,y1,x2,y2){el('line',{x1:x1,y1:y1,x2:x2,y2:y2,stroke:'#5a5a5a','stroke-dasharray':'4 3','shape-rendering':'crispEdges'},s);}
  p.ax.forEach(function(a){var y=Math.floor(Yc(a[1]))+.5;grid(lx,y,rx,y);});
  var vx=Math.floor(X(p.vx))+.5;grid(vx,top,vx,by);
  p.cs.split(' ').forEach(function(c){var a=c.split(',');var x=Math.floor(X(+a[0])),t=Math.round(Yc(+a[1])),b=Math.round(Yc(+a[2])),wt=Math.round(Yc(+a[3])),wb=Math.round(Yc(+a[4])),k=a[5];
    if(k!='W')rect(s,x,wt,1,Math.max(wb-wt,1),'#e6e6e6');
    var col=k=='r'?R:k=='g'?G:W;
    rect(s,x-2,t,5,Math.max(b-t,1),col);});
  function poly(list,col,extra){(list||[]).forEach(function(pts){var q=pts.split(' ').map(function(v){var a=v.split(',');return (X(+a[0]).toFixed(1))+','+(Yc(+a[1]).toFixed(1));}).join(' ');
    var at={points:q,fill:'none',stroke:col,'shape-rendering':'crispEdges'};if(extra)at['stroke-dasharray']=extra;el('polyline',at,s);});}
  poly(p.g,G);poly(p.c,C);poly(p.m,M);poly(p.y,Y1);poly(p.dash,G,'2 3');
  rect(s,rx,top,1,by-top,R);rect(s,lx-2,top,1,by-top,R);rect(s,lx-2,by,rx-lx+3,1,R);
  el('line',{x1:lx,y1:by+2.5,x2:X(p.rx)*.8+X(p.l)*.2,y2:by+2.5,stroke:R,'stroke-dasharray':'1 5','shape-rendering':'crispEdges'},s);
  rect(s,Math.floor(X(p.vx)),by,1,6,R);
  p.ax.forEach(function(a){rect(s,rx,Math.floor(Yc(a[1])),4,1,R);});
  p.ax.forEach(function(a){text(s,a[0],X(p.lx),Yc(a[1])+5);});
  var tg=p.tag,ty=Math.round(Yc(tg[1])),th=Math.round(Yc(tg[2]))-ty;
  rect(s,rx+1,ty,right-rx-1,th,R);text(s,tg[0],X(p.lx),ty+th/2+5,'#8c0000');
  if(p.cross){rect(s,lx-3,Math.floor(Yc(p.cross[0])),rx-lx+3,1,W);rect(s,Math.floor(X(p.cross[1])),top,1,by-top-3,W);}
  (p.up||[]).forEach(function(a){var x=X(a[0]),t=Yc(a[1]),b=Yc(a[2]);el('polygon',{points:[x,t,x+4.5,t+4,x+1.5,t+4,x+1.5,b-1,x+3.5,b-1,x+3.5,b,x-3.5,b,x-3.5,b-1,x-1.5,b-1,x-1.5,t+4,x-4.5,t+4].join(' '),fill:Y1},s);});
  (p.dn||[]).forEach(function(a){var x=X(a[0]),t=Yc(a[1]),b=Yc(a[2]);el('polygon',{points:[x,b,x+4.5,b-4,x+1.5,b-4,x+1.5,t+1,x+3.5,t+1,x+3.5,t,x-3.5,t,x-3.5,t+1,x-1.5,t+1,x-1.5,b-4,x-4.5,b-4].join(' '),fill:Y1},s);});
  (p.ci||[]).forEach(function(a){el('circle',{cx:X(a[0]),cy:Yc(a[1]),r:3,fill:'none',stroke:Y1},s);});
  (p.arr||[]).forEach(function(a){var y=Math.floor(Yc(a[2]));rect(s,X(a[0]),y,X(a[1])-X(a[0]),1,W);rect(s,X(a[1])-3,y-1,2,3,W);});
  if(p.box){var bx=Math.floor(X(p.box[0]))+.5,by0=Math.floor(Yc(p.box[1]))+.5;el('rect',{x:bx,y:by0,width:Math.round((p.box[2]-p.box[0])/p.z),height:Math.round((p.box[3]-p.box[1])/3),fill:'none',stroke:W,'shape-rendering':'crispEdges'},s);}
  p.tx.forEach(function(a){text(s,a[0],X(a[1]),Yc(a[2])+5,a[3]);});
  p.ti.forEach(function(a){text(s,a[0],X(a[1]),Yc(p.ty)+5,a[2]);});
  var fx=X(p.face[0]),fy=Yc(p.face[1]);
  el('circle',{cx:fx,cy:fy,r:7,fill:'#e00000'},s);
  el('circle',{cx:fx-2.5,cy:fy-2,r:1,fill:'#400000'},s);el('circle',{cx:fx+2.5,cy:fy-2,r:1,fill:'#400000'},s);
  el('path',{d:'M'+(fx-3.5)+' '+(fy+3.5)+'q3.500 -3.500 7 0',fill:'none',stroke:'#400000'},s);
  var sy=by+7,sh=13;
  function sbtn(x,dir){rect(s,x,sy,13,sh,'#ffffff');el('rect',{x:x+.5,y:sy+.5,width:12,height:sh-1,fill:'none',stroke:'#8a96c8','shape-rendering':'crispEdges'},s);
    var c=x+6.5,m=sy+6.5;el('polygon',{points:[c,m-4,c+4,m,c,m+4,c-4,m].join(' '),fill:'#333'},s);rect(s,dir<0?c:c-3,m-1,3,2,'#fff');}
  text(s,'017',vb[0]+13,by+17);
  text(s,'2018',X(p.vx),by+17);
  rect(s,X(p.dz[0]),sy,X(p.dz[1])-X(p.dz[0])+1,sh,'url(#dz'+i+')');
  sbtn(vb[0],-1);sbtn(Math.floor(X(p.bt)),1);
});
```
